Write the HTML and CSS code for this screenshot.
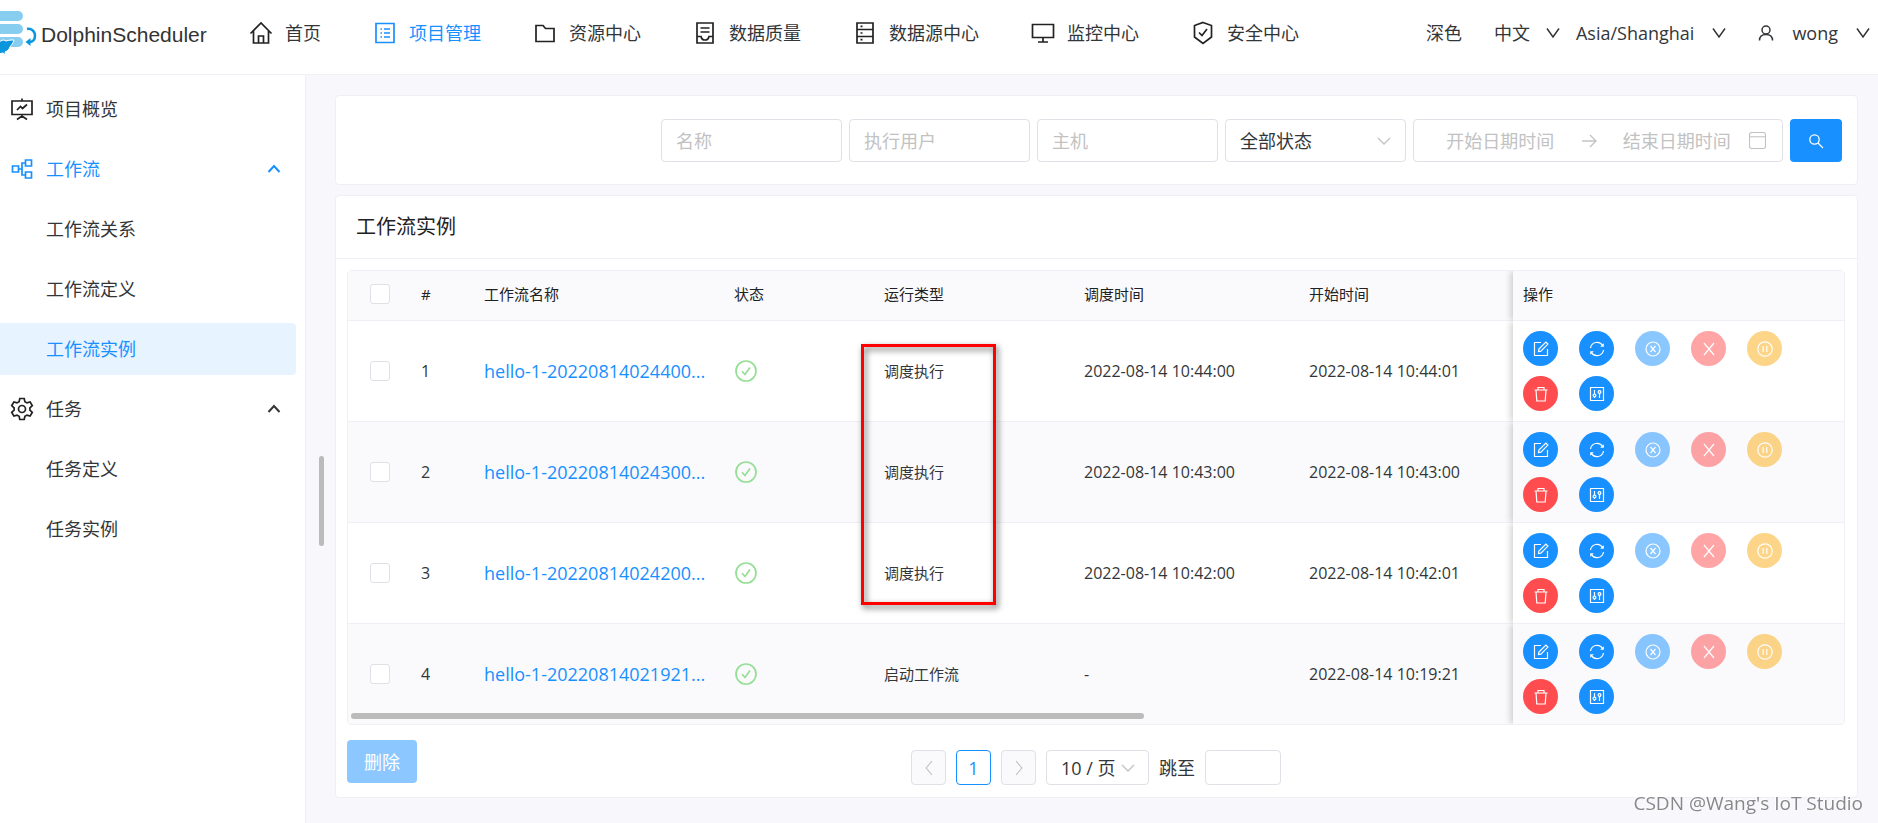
FILE: index.html
```
<!DOCTYPE html>
<html lang="zh-CN">
<head>
<meta charset="UTF-8">
<meta name="viewport" content="width=device-width, initial-scale=1.0">
<title>DolphinScheduler</title>
<link rel="stylesheet" href="styles.css">
</head>
<body>
<svg class="sprite" aria-hidden="true">
    <symbol id="i-home" viewBox="0 0 24 24"><path d="M1.500 12.500L12 2l10.500 10.500M4.500 10v12h15V10M9.500 22v-7h5v7"/></symbol>
    <symbol id="i-profile" viewBox="0 0 24 24"><path d="M3 2.500h18v19H3zM7.500 8h1.500M7.500 12h1.500M7.500 16h1.500M11 8h6M11 12h6M11 16h6"/></symbol>
    <symbol id="i-folder" viewBox="0 0 24 24"><path d="M3 4.500h7l2.500 3H21v13H3z"/></symbol>
    <symbol id="i-quality" viewBox="0 0 24 24"><path d="M4 2h16v20H4zM7.500 7h9M7.500 11h9M4 15.500h4c.5 2.500 2 3.500 4 3.500s3.500-1 4-3.500h4"/></symbol>
    <symbol id="i-database" viewBox="0 0 24 24"><path d="M4 2h16v20H4zM4 8.500h16M4 15.500h16M7.500 5.300h2M7.500 12h2M7.500 18.700h2"/></symbol>
    <symbol id="i-monitor" viewBox="0 0 24 24"><path d="M1.500 3.500h21v13h-21zM12 16.500V21M7 21h10"/></symbol>
    <symbol id="i-safety" viewBox="0 0 24 24"><path d="M12 1.500l8.500 3v11.500L12 22.500 3.500 16V4.500zM8 11.500l3 3 5-6.500"/></symbol>
    <symbol id="i-overview" viewBox="0 0 24 24"><path d="M2 4h20v13.500H2zM12 1.500V4M12 17.500V20M7 22.500l5-3.500 5 3.500M7 13l3.500-3.500 2 2L17 7.500"/></symbol>
    <symbol id="i-flow" viewBox="0 0 24 24"><path d="M2.500 9h6v6h-6zM15.500 3h6v6h-6zM15.500 15h6v6h-6zM8.500 12H12M15.500 6H12v12h3.500"/></symbol>
    <symbol id="i-setting" viewBox="0 0 24 24"><path d="M9.800 1.500h4.400l.7 3.200 2.100 1.200 3.100-1 2.200 3.800-2.400 2.200v2.200l2.400 2.200-2.200 3.800-3.100-1-2.100 1.200-.7 3.200H9.800l-.7-3.200L7 18.100l-3.100 1-2.200-3.800 2.400-2.200v-2.200L1.700 8.700l2.200-3.800 3.100 1 2.100-1.200z"/><circle cx="12" cy="12" r="3.500"/></symbol>
    <symbol id="i-up" viewBox="0 0 14 14"><path d="M1.500 10L7 4l5.500 6"/></symbol>
    <symbol id="i-down" viewBox="0 0 14 14"><path d="M1 2.500L7 11l6-8.500"/></symbol>
    <symbol id="i-left" viewBox="0 0 14 14"><path d="M9.500 1L4.500 7l5 6"/></symbol>
    <symbol id="i-right" viewBox="0 0 14 14"><path d="M4.500 1l5 6-5 6"/></symbol>
    <symbol id="i-user" viewBox="0 0 16 16"><circle cx="8" cy="5" r="4"/><path d="M1.500 15.500c0-4 2.500-6 6.500-6s6.500 2 6.500 6"/></symbol>
    <symbol id="i-arrow" viewBox="0 0 16 16"><path d="M1 8h14M9 2l6 6-6 6"/></symbol>
    <symbol id="i-calendar" viewBox="0 0 16 16"><rect x="0.500" y="0.500" width="15" height="15" rx="2"/><path d="M.5 4.500h15"/></symbol>
    <symbol id="i-search" viewBox="0 0 16 16"><circle cx="6.500" cy="6.500" r="4.700"/><path d="M10 10l5 5"/></symbol>
    <symbol id="i-check" viewBox="0 0 22 22"><circle cx="11" cy="11" r="10"/><path d="M7 11.200l3 3.300 5-7"/></symbol>
    <symbol id="i-edit" viewBox="0 0 16 16"><path d="M8 1.500H1.500v13h13V8"/><path d="M5.500 10.500l.4-2.400 7-7 2 2-7 7z"/></symbol>
    <symbol id="i-rerun" viewBox="0 0 16 16"><path d="M1.500 7A6.600 6.600 0 0 1 13.700 4.600M14.500 9A6.600 6.600 0 0 1 2.300 11.400"/><path class="solid" d="M14.800 2.200v3.600h-3.600zM1.200 13.800v-3.600h3.600z"/></symbol>
    <symbol id="i-stop" viewBox="0 0 16 16"><circle cx="8" cy="8" r="7"/><path d="M5.500 5l5 6M10.500 5l-5 6"/></symbol>
    <symbol id="i-close" viewBox="0 0 16 16"><path d="M3 2l10 12M13 2L3 14"/></symbol>
    <symbol id="i-pause" viewBox="0 0 16 16"><circle cx="8" cy="8" r="7.200"/><path d="M6.200 5v6M9.800 5v6"/></symbol>
    <symbol id="i-delete" viewBox="0 0 16 16"><path d="M1.500 4h13M3 4l.8 11h8.400L13 4M5 4V1.500h6V4"/></symbol>
    <symbol id="i-control" viewBox="0 0 16 16"><path d="M1.500 1.500h13v13h-13zM5.500 4v4M5.500 11v1M10.500 4v.500M10.500 7.500V12"/><circle cx="5.500" cy="9.500" r="1.400"/><circle cx="10.500" cy="6" r="1.400"/></symbol>
</svg>

<header class="header">
    <a class="logo" href="#">
        <svg class="logo-mark" viewBox="0 0 37 50">
            <g fill="#87cdf0">
                <rect x="-10" y="3" width="33" height="10" rx="5"/>
                <rect x="-10" y="16" width="33" height="10" rx="5"/>
                <rect x="-10" y="29" width="33" height="10" rx="5"/>
            </g>
            <path d="M-2 35c2-1 3-3 6-3l2 1c3-1 5-1 8-1-1 4-3 5-4 7-1 3-3 4-5 5l1 3-3-2-5 1z" fill="#0a96dc" stroke="#fff" stroke-width="1"/>
            <path d="M27 21c4-1 8 2 8 6.500s-2 6.500-6 6.500" fill="none" stroke="#0a96dc" stroke-width="2.500"/>
            <path d="M30.500 30l-5 4 5 4z" fill="#0a96dc"/>
        </svg>
        <span>DolphinScheduler</span>
    </a>
    <nav class="nav">
        <a href="#"><svg class="icon"><use href="#i-home"/></svg>首页</a>
        <a href="#" class="active"><svg class="icon"><use href="#i-profile"/></svg>项目管理</a>
        <a href="#"><svg class="icon"><use href="#i-folder"/></svg>资源中心</a>
        <a href="#"><svg class="icon"><use href="#i-quality"/></svg>数据质量</a>
        <a href="#"><svg class="icon"><use href="#i-database"/></svg>数据源中心</a>
        <a href="#"><svg class="icon"><use href="#i-monitor"/></svg>监控中心</a>
        <a href="#"><svg class="icon"><use href="#i-safety"/></svg>安全中心</a>
    </nav>
    <div class="settings">
        <button type="button" class="theme">深色</button>
        <button type="button" class="lang">中文<svg class="icon-sm"><use href="#i-down"/></svg></button>
        <button type="button" class="zone">Asia/Shanghai<svg class="icon-sm"><use href="#i-down"/></svg></button>
        <button type="button" class="user"><svg class="icon-user"><use href="#i-user"/></svg>wong<svg class="icon-sm"><use href="#i-down"/></svg></button>
    </div>
</header>

<div class="layout">
    <aside class="sidebar">
        <a href="#"><svg class="icon"><use href="#i-overview"/></svg>项目概览</a>
        <a href="#" class="open"><svg class="icon"><use href="#i-flow"/></svg>工作流<svg class="arrow"><use href="#i-up"/></svg></a>
        <a href="#" class="sub">工作流关系</a>
        <a href="#" class="sub">工作流定义</a>
        <a href="#" class="sub current">工作流实例</a>
        <a href="#"><svg class="icon"><use href="#i-setting"/></svg>任务<svg class="arrow"><use href="#i-up"/></svg></a>
        <a href="#" class="sub">任务定义</a>
        <a href="#" class="sub">任务实例</a>
        <div class="side-thumb"></div>
    </aside>

    <main class="main">
        <form class="card filters">
            <input type="text" aria-label="名称" placeholder="名称">
            <input type="text" aria-label="执行用户" placeholder="执行用户">
            <input type="text" aria-label="主机" placeholder="主机">
            <select aria-label="状态"><option>全部状态</option></select>
            <div class="range">
                <input type="text" aria-label="开始日期时间" placeholder="开始日期时间">
                <svg class="icon-xs"><use href="#i-arrow"/></svg>
                <input type="text" aria-label="结束日期时间" placeholder="结束日期时间">
                <svg class="icon-cal"><use href="#i-calendar"/></svg>
            </div>
            <button type="button" class="search" aria-label="搜索"><svg class="icon-xs"><use href="#i-search"/></svg></button>
        </form>

        <section class="card">
            <h2>工作流实例</h2>
            <div class="content">
                <div class="table-wrap">
                    <table>
                        <colgroup>
                            <col class="c-check"><col class="c-num"><col class="c-name"><col class="c-state"><col class="c-type"><col class="c-time"><col><col class="c-op">
                        </colgroup>
                        <thead>
                            <tr>
                                <th class="check"><input type="checkbox" aria-label="全选"></th>
                                <th>#</th>
                                <th>工作流名称</th>
                                <th>状态</th>
                                <th>运行类型</th>
                                <th>调度时间</th>
                                <th>开始时间</th>
                                <th class="op">操作</th>
                            </tr>
                        </thead>
                        <tbody id="rows"></tbody>
                    </table>
                    <div class="table-thumb"></div>
                    <div class="mark"></div>
                </div>
                <div class="footer">
                    <button type="button" class="remove" disabled>删除</button>
                    <div class="pager">
                        <button type="button" disabled aria-label="上一页"><svg class="icon-pg"><use href="#i-left"/></svg></button>
                        <button type="button" class="on">1</button>
                        <button type="button" disabled aria-label="下一页"><svg class="icon-pg"><use href="#i-right"/></svg></button>
                        <select aria-label="每页条数"><option>10 / 页</option></select>
                        <label for="jump">跳至</label>
                        <input type="text" id="jump">
                    </div>
                </div>
            </div>
        </section>
    </main>
</div>
<div class="watermark">CSDN @Wang's IoT Studio</div>

<script>
    var data = [
        ['hello-1-20220814024400...', '调度执行', '2022-08-14 10:44:00', '2022-08-14 10:44:01'],
        ['hello-1-20220814024300...', '调度执行', '2022-08-14 10:43:00', '2022-08-14 10:43:00'],
        ['hello-1-20220814024200...', '调度执行', '2022-08-14 10:42:00', '2022-08-14 10:42:01'],
        ['hello-1-20220814021921...', '启动工作流', '-', '2022-08-14 10:19:21']
    ];
    // icon, label, color class, disabled
    var actions = [
        ['edit', '编辑', 'blue', false],
        ['rerun', '重跑', 'blue', false],
        ['stop', '恢复失败', 'blue', true],
        ['close', '停止', 'red', true],
        ['pause', '暂停', 'yellow', true],
        ['delete', '删除', 'red', false],
        ['control', '甘特图', 'blue', false]
    ];

    var buttons = actions.map(function(a) {
        return `<button type="button" class="${a[2]}" aria-label="${a[1]}" ${a[3] ? 'disabled' : ''}><svg><use href="#i-${a[0]}"/></svg></button>`;
    }).join('');

    document.getElementById('rows').innerHTML = data.map(function(row, i) {
        return `
            <tr>
                <td class="check"><input type="checkbox" aria-label="选择 ${i + 1}"></td>
                <td class="num">${i + 1}</td>
                <td><a href="#">${row[0]}</a></td>
                <td><svg class="state"><use href="#i-check"/></svg></td>
                <td>${row[1]}</td>
                <td class="num">${row[2]}</td>
                <td class="num">${row[3]}</td>
                <td class="op"><div class="actions">${buttons}</div></td>
            </tr>
        `;
    }).join('');
</script>
</body>
</html>
```
FILE: styles.css
```
* {
    box-sizing: border-box;
}
body {
    font-family: "Open Sans", "Noto Sans CJK SC", sans-serif;
    font-size: 18px;
    line-height: 24px;
    margin: 0;
    min-height: 100vh;
    display: flex;
    flex-direction: column;
    color: #333639;
    background-color: #f7f7fc;
}
a {
    color: inherit;
    text-decoration: none;
}
button, input, select {
    font: inherit;
    color: inherit;
}
button {
    cursor: pointer;
    padding: 0;
    border: none;
    background: none;
}
svg {
    fill: none;
    stroke: currentColor;
    flex-shrink: 0;
}
.solid {
    fill: currentColor;
    stroke: none;
}
.sprite {
    position: absolute;
    width: 0;
    height: 0;
}
.icon {
    width: 24px;
    height: 24px;
    stroke-width: 1.7;
}
.icon-sm {
    width: 14px;
    height: 14px;
    stroke-width: 1.5;
}
.icon-user {
    width: 16px;
    height: 16px;
    stroke-width: 1.5;
}
.icon-xs {
    width: 16px;
    height: 16px;
    stroke-width: 1.3;
}
.icon-cal {
    width: 17px;
    height: 17px;
}
.icon-pg {
    width: 16px;
    height: 16px;
}

/* header */
.header {
    display: flex;
    height: 75px;
    padding-bottom: 8px;
    background-color: #fff;
    border-bottom: 1px solid #efeff5;
}
.logo {
    display: flex;
    align-items: center;
    gap: 4px;
    width: 249px;
    font-family: "Liberation Sans", sans-serif;
    font-size: 21px;
    color: #333;
}
.logo span {
    padding-top: 4px;
}
.logo-mark {
    width: 37px;
    height: 50px;
    stroke: none;
}
.nav {
    display: flex;
    align-items: center;
    gap: 52px;
}
.nav a {
    display: flex;
    align-items: center;
    gap: 12px;
    white-space: nowrap;
}
.nav .active {
    color: #1890ff;
}
.nav .icon, .sidebar .icon {
    color: #222;
}
.nav .active .icon, .sidebar .open .icon {
    color: #1890ff;
}
.settings {
    display: flex;
    align-items: center;
    margin-left: auto;
    padding-right: 8px;
}
.settings button {
    display: flex;
    align-items: center;
    gap: 18px;
}
.settings .lang {
    gap: 16px;
    margin-left: 32px;
}
.zone {
    margin-left: 16px;
}
.user {
    margin-left: 32px;
}

/* sidebar */
.layout {
    display: flex;
    flex: 1;
}
.sidebar {
    position: relative;
    width: 306px;
    padding-right: 9px;
    background-color: #fff;
    border-right: 1px solid #efeff5;
}
.sidebar a {
    display: flex;
    align-items: center;
    gap: 12px;
    height: 52px;
    margin-top: 8px;
    padding: 0 15px 0 10px;
}
.sidebar .sub {
    padding-left: 46px;
}
.sidebar .open {
    color: #1890ff;
}
.sidebar .current {
    color: #1890ff;
    background-color: #e7f3ff;
    border-radius: 0 4px 4px 0;
}
.arrow {
    width: 14px;
    height: 14px;
    margin-left: auto;
    stroke-width: 2;
}
.side-thumb {
    position: absolute;
    top: 381px;
    right: -19px;
    width: 5px;
    height: 90px;
    border-radius: 3px;
    background-color: #bbb;
}

/* content */
.main {
    flex: 1;
    min-width: 0;
    padding: 20px 20px 20px 29px;
}
.card {
    background-color: #fff;
    border: 1px solid #efeff5;
    border-radius: 4px;
    margin-bottom: 10px;
}
.filters {
    display: flex;
    justify-content: flex-end;
    gap: 7px;
    padding: 23px 15px 22px;
}
.filters input, .filters select, .pager select, .pager input {
    width: 181px;
    height: 43px;
    padding: 0 14px;
    border: 1px solid #e0e0e6;
    border-radius: 4px;
    background-color: #fff;
}
.filters select, .pager select {
    appearance: none;
    background-image: url("data:image/svg+xml,%3Csvg xmlns='http://www.w3.org/2000/svg' width='14' height='14' fill='none' stroke='%23c2c2c2' stroke-width='1.3'%3E%3Cpath d='M1 4l6 6 6-6'/%3E%3C/svg%3E");
    background-repeat: no-repeat;
    background-position: right 14px center;
}
::placeholder {
    color: #c2c2c2;
    opacity: 1;
}
.filters .range {
    display: flex;
    align-items: center;
    gap: 6px;
    width: 370px;
    padding: 0 16px 0 20px;
    border: 1px solid #e0e0e6;
    border-radius: 4px;
    color: #c2c2c2;
}
.range input {
    flex: 1;
    min-width: 0;
    height: 40px;
    padding: 0;
    border: none;
    text-align: center;
}
.range .icon-xs {
    margin: 0 8px;
}
.search {
    width: 52px;
    height: 43px;
    border-radius: 4px;
    color: #fff;
    background-color: #1890ff;
}
.search svg {
    display: block;
    margin: auto;
}
h2 {
    margin: 0;
    padding: 15px 20px;
    font-size: 20px;
    font-weight: 400;
    line-height: 32px;
    color: #1f2225;
    border-bottom: 1px solid #efeff5;
}
.content {
    padding: 11px 12px 12px 11px;
}

/* table */
.table-wrap {
    position: relative;
    border: 1px solid #efeff5;
    border-radius: 4px;
}
table {
    width: 100%;
    table-layout: fixed;
    border-collapse: separate;
    border-spacing: 0;
    font-size: 15px;
}
.c-check, .c-num {
    width: 63px;
}
.c-name {
    width: 250px;
}
.c-state {
    width: 150px;
}
.c-type {
    width: 200px;
}
.c-time {
    width: 225px;
}
.c-op {
    width: 331px;
}
th, td {
    padding: 10px;
    text-align: left;
    white-space: nowrap;
    border-bottom: 1px solid #efeff5;
}
th {
    height: 50px;
    padding: 0 10px 4px;
    font-weight: 400;
    color: #1f2225;
    background-color: #fafafc;
}
tr:nth-child(even) td {
    background-color: #fafafc;
}
tbody tr:last-child td {
    border-bottom: none;
}
td a {
    font-size: 18px;
    color: #1890ff;
}
.num {
    font-size: 16px;
}
.check {
    padding-left: 22px;
}
input[type="checkbox"] {
    appearance: none;
    display: block;
    width: 20px;
    height: 20px;
    margin: 0;
    border: 1px solid #e0e0e6;
    border-radius: 3px;
    background-color: #fff;
}
.state {
    display: block;
    width: 22px;
    height: 22px;
    margin-left: 1px;
    color: #95de95;
    stroke-width: 1.7;
}
.op {
    box-shadow: -2px 0 7px rgba(0,0,0,0.2);
    clip-path: inset(0 0 0 -12px);
}
.actions {
    display: flex;
    flex-wrap: wrap;
    gap: 10px 21px;
}
.actions button {
    width: 35px;
    height: 35px;
    border-radius: 50%;
    color: #fff;
}
.actions svg {
    display: block;
    width: 16px;
    height: 16px;
    margin: auto;
    stroke-width: 1.2;
}
.actions .blue {
    background-color: #1890ff;
}
.actions .red {
    background-color: #ff4d4f;
}
.actions .yellow {
    background-color: #faad14;
}
.actions button:disabled {
    opacity: 0.5;
}
.table-thumb {
    position: absolute;
    left: 3px;
    bottom: 5px;
    width: 53%;
    height: 6px;
    border-radius: 3px;
    background-color: #bbb;
}
.mark {
    position: absolute;
    top: 73px;
    left: 513px;
    width: 135px;
    height: 261px;
    border: 3px solid #f00;
    filter: drop-shadow(2px 3px 3px rgba(0,0,0,0.6));
}

/* footer */
.footer {
    display: grid;
    grid-template-columns: 1fr auto 1fr;
    align-items: start;
    padding-top: 15px;
}
.remove {
    justify-self: start;
    width: 70px;
    height: 43px;
    border-radius: 4px;
    color: #fff;
    background-color: #8cc8ff;
}
.pager {
    display: flex;
    align-items: center;
    gap: 10px;
    margin-top: 10px;
}
.pager button {
    width: 35px;
    height: 35px;
    border: 1px solid #e0e0e6;
    border-radius: 4px;
    background-color: #fff;
}
.pager button:disabled {
    color: #c2c2c2;
    background-color: #fafafc;
}
.pager button svg {
    display: block;
    margin: auto;
}
.pager .on {
    color: #1890ff;
    border-color: #1890ff;
}
.pager select {
    width: 103px;
    height: 35px;
    background-position: right 13px center;
}
.pager input {
    width: 76px;
    height: 35px;
}
.watermark {
    position: fixed;
    right: 15px;
    bottom: 8px;
    font-size: 19px;
    color: #888;
    text-shadow: -1px -1px 0 #fff;
}
```
